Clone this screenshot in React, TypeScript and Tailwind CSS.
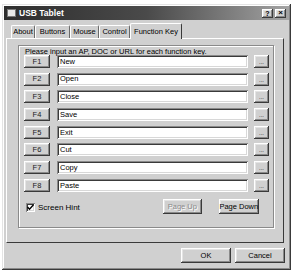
const raised =
  'bg-[#d0d0d0] shadow-[inset_-1px_-1px_#3a3a3a,inset_1px_1px_#ffffff,inset_-2px_-2px_#8a8a8a,inset_2px_2px_#e4e4e4]';
const sunken =
  'bg-white shadow-[inset_1px_1px_#8a8a8a,inset_-1px_-1px_#ffffff,inset_2px_2px_#3a3a3a,inset_-2px_-2px_#d8d8d8]';

const keys = [
  ['F1', 'New'],
  ['F2', 'Open'],
  ['F3', 'Close'],
  ['F4', 'Save'],
  ['F5', 'Exit'],
  ['F6', 'Cut'],
  ['F7', 'Copy'],
  ['F8', 'Paste'],
];

const tabs: [string, string][] = [
  ['About', 'w-[24px]'],
  ['Buttons', 'w-[35px]'],
  ['Mouse', 'w-[29px]'],
  ['Control', 'w-[31px]'],
];

const App = () => {
  return (
    <div
      className="w-[292px] h-[273px] bg-white pt-[4px] pl-[2px] text-[7.5px] leading-none text-black"
      style={{ fontFamily: '"Liberation Sans", Arial, sans-serif' }}
    >
      <div className="w-[289px] h-[266px] bg-[#d0d0d0] p-[2px] shadow-[inset_-1px_-1px_#3a3a3a,inset_1px_1px_#e4e4e4,inset_-2px_-2px_#8a8a8a,inset_2px_2px_#ffffff] flex flex-col">
        {/* title bar */}
        <div className="h-[14px] flex items-center bg-gradient-to-r from-[#2e2e2e] via-[#4a4a4a] to-[#a4a4a4] pl-[3px] pr-[3px]">
          <div className="w-[9px] h-[8px] bg-[#e8e8e8] border border-[#777]" />
          <span className="ml-[3px] text-white font-bold text-[8.5px]">USB Tablet</span>
          <div className="ml-auto flex gap-[2px]">
            <div className={`${raised} w-[11px] h-[9px] flex items-center justify-center text-[7px] font-bold`}>?</div>
            <div className={`${raised} w-[11px] h-[9px] flex items-center justify-center text-[8px] font-bold`}>×</div>
          </div>
        </div>

        {/* tabs */}
        <div className="h-[18px] flex items-end pl-[7px]">
          {tabs.map(([t, w]) => (
            <div
              key={t}
              className={`${w} h-[13px] flex items-center justify-center border-t border-l border-white border-r border-r-[#6a6a6a] rounded-t-[2px]`}
            >
              {t}
            </div>
          ))}
          <div className="w-[52px] h-[16px] -mb-px relative z-10 bg-[#d0d0d0] flex items-center justify-center border-t border-l border-white border-r border-r-[#3a3a3a] rounded-t-[2px]">
            Function Key
          </div>
        </div>

        {/* tab panel */}
        <div className="ml-[2px] w-[278px] h-[205px] border border-t-white border-l-white border-r-[#3a3a3a] border-b-[#3a3a3a] pt-[6px] pl-[11px]">
          <div className="w-[256px] h-[183px] border border-[#8a8a8a] shadow-[1px_1px_#ffffff,inset_1px_1px_#ffffff] pl-[5px] pr-[3px]">
            <div className="h-[9px] pt-[2px] pl-[1px]">Please input an AP, DOC or URL for each function key.</div>
            <div className="flex flex-col gap-[4.7px]">
              {keys.map(([k, v]) => (
                <div key={k} className="flex items-center h-[13px]">
                  <div className={`${raised} w-[26px] h-[13px] flex items-center justify-center text-[#222]`}>{k}</div>
                  <div className={`${sunken} ml-[7px] w-[191px] h-[13px] flex items-center pl-[3px]`}>{v}</div>
                  <div className={`${raised} ml-[6px] w-[15px] h-[13px] flex items-end justify-center pb-[3px] text-[6px]`}>...</div>
                </div>
              ))}
            </div>
            <div className="flex items-center mt-[7px] h-[15px]">
              <div className={`${sunken} w-[9px] h-[9px] ml-[2px] mt-[3px] flex items-center justify-center`}>
                <svg width="7" height="7" viewBox="0 0 7 7">
                  <path d="M0.5 3 L2.5 5.2 L6.5 0.8" stroke="#000" strokeWidth="1.4" fill="none" />
                </svg>
              </div>
              <span className="ml-[3px] mt-[3px] text-[8px]">Screen Hint</span>
              <div
                className={`${raised} ml-[83px] w-[39px] h-[15px] flex items-center justify-center text-[#8a8a8a] [text-shadow:1px_1px_#ffffff]`}
              >
                Page Up
              </div>
              <div className={`${raised} ml-[17px] w-[40px] h-[15px] flex items-center justify-center`}>Page Down</div>
            </div>
          </div>
        </div>

        {/* bottom buttons */}
        <div className="flex justify-end gap-[4px] mt-[5px] pr-[4px]">
          <div className={`${raised} w-[50px] h-[15px] flex items-center justify-center`}>OK</div>
          <div className={`${raised} w-[50px] h-[15px] flex items-center justify-center`}>Cancel</div>
        </div>
      </div>
    </div>
  );
};

export default App;
